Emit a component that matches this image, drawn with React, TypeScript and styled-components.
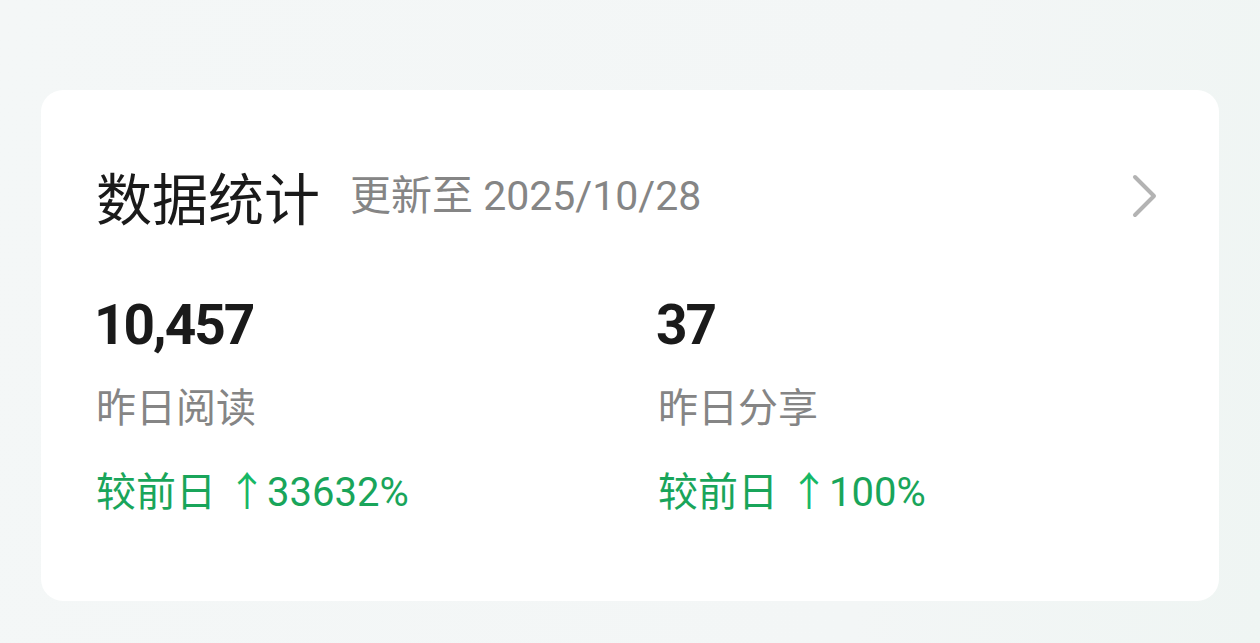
import React from "react";
import styled, { createGlobalStyle } from "styled-components";

const GlobalStyle = createGlobalStyle`
  html, body {
    margin: 0;
    padding: 0;
    background: #f3f6f6;
  }
  body {
    font-family: Roboto, "Noto Sans CJK SC", sans-serif;
  }
`;

const Page = styled.div`
  width: 1260px;
  height: 643px;
  box-sizing: border-box;
  padding: 90px 41px 0;
  background: linear-gradient(100deg, #f4f7f7 0%, #f3f6f6 70%, #eff5f3 100%);
`;

const Card = styled.div`
  height: 511px;
  box-sizing: border-box;
  background: #ffffff;
  border-radius: 22px;
  padding: 73px 55px 0 55px;
`;

const Header = styled.div`
  display: flex;
  align-items: center;
  height: 66px;
`;

const Title = styled.h2`
  margin: 0;
  font-size: 56px;
  font-weight: 400;
  color: #1a1a1a;
  font-family: "Noto Sans CJK SC", sans-serif;
  line-height: 66px;
`;

const UpdatedAt = styled.span`
  margin-left: 30px;
  font-size: 41px;
  color: #858585;
  line-height: 66px;
`;

const Chevron = styled.svg`
  margin-left: auto;
  margin-right: 6px;
  width: 26px;
  height: 44px;
`;

const StatsGrid = styled.div`
  display: grid;
  grid-template-columns: 1fr 1fr;
  column-gap: 56px;
  margin-top: 68px;
`;

const Stat = styled.div`
  display: flex;
  flex-direction: column;
`;

const Value = styled.div`
  font-family: Roboto, sans-serif;
  font-weight: 700;
  font-size: 55px;
  letter-spacing: -2px;
  line-height: 56px;
  color: #1a1a1a;
  margin-left: -2px;
`;

const Label = styled.div`
  margin-top: 28px;
  font-size: 40px;
  line-height: 56px;
  color: #858585;
`;

const Change = styled.div`
  margin-top: 28px;
  font-size: 40px;
  line-height: 56px;
  color: #19a55a;
`;

const Arrow = styled.span`
  color: #17b866;
  margin-left: 11px;
`;

interface StatItem {
  value: string;
  label: string;
  change: string;
}

const stats: StatItem[] = [
  { value: "10,457", label: "昨日阅读", change: "33632%" },
  { value: "37", label: "昨日分享", change: "100%" },
];

function App() {
  return (
    <>
      <GlobalStyle />
      <Page>
        <Card>
          <Header>
            <Title>数据统计</Title>
            <UpdatedAt>更新至 2025/10/28</UpdatedAt>
            <Chevron viewBox="0 0 26 44" fill="none">
              <path
                d="M3 3 L22 22 L3 41"
                stroke="#b3b3b3"
                strokeWidth="4"
                strokeLinecap="round"
                strokeLinejoin="round"
              />
            </Chevron>
          </Header>
          <StatsGrid>
            {stats.map(({ value, label, change }) => (
              <Stat key={label}>
                <Value>{value}</Value>
                <Label>{label}</Label>
                <Change>
                  较前日<Arrow>↑</Arrow>
                  {change}
                </Change>
              </Stat>
            ))}
          </StatsGrid>
        </Card>
      </Page>
    </>
  );
}

export default App;
